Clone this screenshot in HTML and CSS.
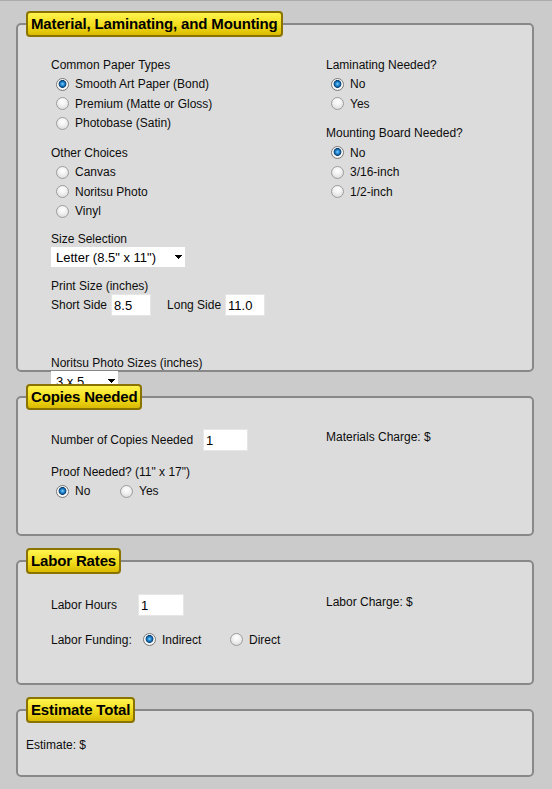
FILE: index.html
```html
<!DOCTYPE html>
<html lang="en">
<head>
<meta charset="utf-8">
<title>Print Estimate</title>
<link rel="stylesheet" href="styles.css">
</head>
<body>
<form class="form">
  <fieldset class="panel">
    <legend class="badge">Material, Laminating, and Mounting</legend>
    <div class="body body-material">
      <div class="col">
        <div class="group">
          <div class="row">Common Paper Types</div>
          <label class="row opt"><input type="radio" name="paper" checked>Smooth Art Paper (Bond)</label>
          <label class="row opt"><input type="radio" name="paper">Premium (Matte or Gloss)</label>
          <label class="row opt"><input type="radio" name="paper">Photobase (Satin)</label>
        </div>
        <div class="group mt10">
          <div class="row">Other Choices</div>
          <label class="row opt"><input type="radio" name="paper">Canvas</label>
          <label class="row opt"><input type="radio" name="paper">Noritsu Photo</label>
          <label class="row opt"><input type="radio" name="paper">Vinyl</label>
        </div>
        <div class="field mt10">
          <div class="lbl">Size Selection</div>
          <select class="sel sel-size"><option>Letter (8.5" x 11")</option></select>
        </div>
        <div class="field mt11">
          <div class="lbl">Print Size (inches)</div>
          <div class="inline">
            <span>Short Side</span><input class="txt txt-side" type="text" value="8.5">
            <span class="ml16">Long Side</span><input class="txt txt-side" type="text" value="11.0">
          </div>
        </div>
        <div class="field mt39">
          <div class="lbl">Noritsu Photo Sizes (inches)</div>
          <select class="sel sel-photo"><option>3 x 5</option></select>
        </div>
      </div>
      <div class="col">
        <div class="group">
          <div class="row">Laminating Needed?</div>
          <label class="row opt"><input type="radio" name="lam" checked>No</label>
          <label class="row opt"><input type="radio" name="lam">Yes</label>
        </div>
        <div class="group mt10">
          <div class="row">Mounting Board Needed?</div>
          <label class="row opt"><input type="radio" name="mount" checked>No</label>
          <label class="row opt"><input type="radio" name="mount">3/16-inch</label>
          <label class="row opt"><input type="radio" name="mount">1/2-inch</label>
        </div>
      </div>
    </div>
  </fieldset>

  <fieldset class="panel">
    <legend class="badge">Copies Needed</legend>
    <div class="body body-copies">
      <div class="col">
        <div class="inline">
          <span class="lbl-copies">Number of Copies Needed</span><input class="txt txt-copies" type="text" value="1">
        </div>
        <div class="row mt11">Proof Needed? (11" x 17")</div>
        <div class="row">
          <label class="opt opt-proof"><input type="radio" name="proof" checked>No</label>
          <label class="opt"><input type="radio" name="proof">Yes</label>
        </div>
      </div>
      <div class="col">
        <div class="lbl">Materials Charge: $</div>
      </div>
    </div>
  </fieldset>

  <fieldset class="panel">
    <legend class="badge">Labor Rates</legend>
    <div class="body body-labor">
      <div class="col">
        <div class="inline">
          <span class="lbl-fixed">Labor Hours</span><input class="txt txt-hours" type="text" value="1">
        </div>
        <div class="row mt14">
          <span class="lbl-fixed">Labor Funding:</span>
          <label class="opt opt-fund"><input type="radio" name="fund" checked>Indirect</label>
          <label class="opt"><input type="radio" name="fund">Direct</label>
        </div>
      </div>
      <div class="col">
        <div class="lbl">Labor Charge: $</div>
      </div>
    </div>
  </fieldset>

  <fieldset class="panel">
    <legend class="badge">Estimate Total</legend>
    <div class="body body-total">
      <div class="lbl">Estimate: $</div>
    </div>
  </fieldset>
</form>
</body>
</html>
```

FILE: styles.css
```css
html {
  background: #cbcbcb;
}
body {
  margin: 0;
  padding: 10px 18px 1px 16px;
  border-top: 1px solid #ababab;
  background: #cbcbcb;
  font-family: "Liberation Sans", Arial, sans-serif;
  font-size: 12px;
  color: #0d0d0d;
}
.form {
  margin: 0;
}
.panel {
  margin: 0 0 12px;
  padding: 0 8px;
  border: 2px solid #888;
  border-radius: 5px;
  background: #dcdcdc;
  min-width: 0;
}
.badge {
  position: relative;
  margin: 0;
  padding: 0 3px;
  border: 2px solid #8a7300;
  border-radius: 4px;
  background: linear-gradient(#fff44e, #f2dc1c 55%, #dabb00);
  font-weight: bold;
  font-size: 15px;
  line-height: 22px;
  letter-spacing: -0.15px;
  color: #000;
}
.body {
  box-sizing: border-box;
  display: grid;
  grid-template-columns: 275px 1fr;
  padding-left: 25px;
}
.body-material {
  height: 333px;
  padding-top: 18px;
}
.body-copies {
  height: 124px;
  padding-top: 19px;
}
.body-labor {
  height: 109px;
  padding-top: 20px;
}
.body-total {
  display: block;
  height: 52px;
  padding: 14px 0 0;
}
.col {
  display: flex;
  flex-direction: column;
  align-items: flex-start;
}
.group {
  display: flex;
  flex-direction: column;
}
.row {
  display: flex;
  align-items: center;
  height: 19.5px;
  white-space: nowrap;
}
.opt {
  display: flex;
  align-items: center;
  cursor: default;
}
.opt-proof {
  width: 64px;
}
.opt-fund {
  width: 87px;
}
.lbl {
  line-height: 16px;
  white-space: nowrap;
}
.lbl-fixed {
  width: 87px;
  flex: none;
}
.lbl-copies {
  width: 152px;
  flex: none;
}
.inline {
  display: flex;
  align-items: center;
  height: 22px;
  white-space: nowrap;
}
.mt10 { margin-top: 10px; }
.mt11 { margin-top: 11px; }
.mt14 { margin-top: 14px; }
.mt39 { margin-top: 39px; }
.ml16 { margin-left: 16px; }

input[type="radio"] {
  appearance: none;
  -webkit-appearance: none;
  box-sizing: border-box;
  width: 13px;
  height: 13px;
  margin: 0 6px 0 5px;
  border: 1px solid #9d9d9d;
  border-radius: 50%;
  background: radial-gradient(circle at 50% 35%, #ffffff 0, #f2f2f2 40%, #d2d2d2 100%);
  flex: none;
}
input[type="radio"]:checked {
  border-color: #7a7a7a;
  background: radial-gradient(circle at 50% 45%, #8fd6ff 0, #2b8fd6 1.6px, #0b5c9e 3px, #0d3f6e 3.6px, #e9e9e9 4.2px, #ffffff 5px, #dcdcdc 6.5px);
}

.txt {
  box-sizing: border-box;
  height: 22px;
  margin: 0 0 0 4px;
  padding: 0 2px;
  border: 1px solid #e6e6e6;
  background: #fff;
  font-family: "Liberation Sans", Arial, sans-serif;
  font-size: 13px;
  color: #000;
  outline: none;
}
.txt-side { width: 40px; }
.txt-copies { width: 45px; margin-left: 0; }
.txt-hours { width: 46px; margin-left: 0; }

.sel {
  appearance: none;
  -webkit-appearance: none;
  box-sizing: border-box;
  height: 20px;
  margin: 0;
  padding: 0 0 0 5px;
  border: 0;
  border-radius: 0;
  font-family: "Liberation Sans", Arial, sans-serif;
  font-size: 13px;
  color: #000;
  background-color: #fff;
  background-image: linear-gradient(45deg, transparent 50%, #000 50%), linear-gradient(135deg, #000 50%, transparent 50%);
  background-size: 4px 4px, 4px 4px;
  background-repeat: no-repeat;
  outline: none;
}
.sel-size {
  width: 134px;
  background-position: 124px 8px, 128px 8px;
}
.sel-photo {
  width: 67px;
  background-position: 57px 8px, 61px 8px;
}
```
